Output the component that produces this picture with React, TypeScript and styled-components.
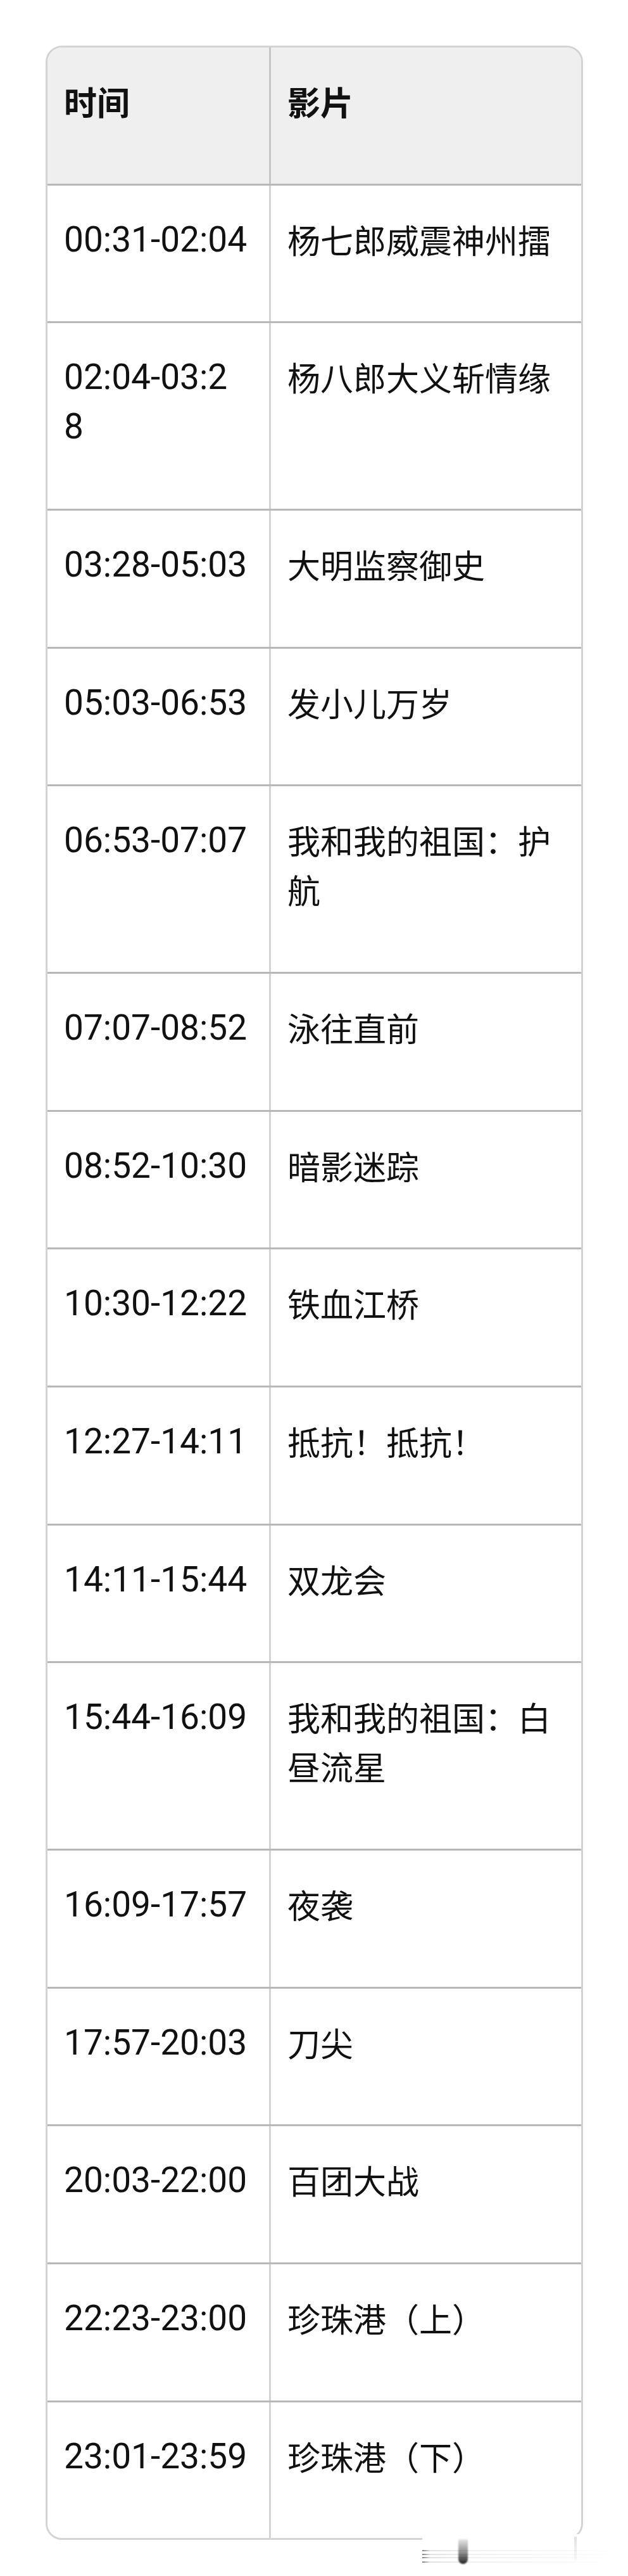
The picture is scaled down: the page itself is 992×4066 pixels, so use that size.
import styled, { createGlobalStyle } from "styled-components";

const GlobalStyle = createGlobalStyle`
  html, body {
    margin: 0;
    padding: 0;
    background: #fff;
  }
  body {
    font-family: Roboto, "Noto Sans CJK SC", sans-serif;
    color: #111;
  }
`;

const schedule: [string, string][] = [
  ["00:31-02:04", "杨七郎威震神州擂"],
  ["02:04-03:2\n8", "杨八郎大义斩情缘"],
  ["03:28-05:03", "大明监察御史"],
  ["05:03-06:53", "发小儿万岁"],
  ["06:53-07:07", "我和我的祖国：护航"],
  ["07:07-08:52", "泳往直前"],
  ["08:52-10:30", "暗影迷踪"],
  ["10:30-12:22", "铁血江桥"],
  ["12:27-14:11", "抵抗！抵抗！"],
  ["14:11-15:44", "双龙会"],
  ["15:44-16:09", "我和我的祖国：白昼流星"],
  ["16:09-17:57", "夜袭"],
  ["17:57-20:03", "刀尖"],
  ["20:03-22:00", "百团大战"],
  ["22:23-23:00", "珍珠港（上）"],
  ["23:01-23:59", "珍珠港（下）"],
];

export default function App() {
  return (
    <Page>
      <GlobalStyle />
      <Table>
        <Row $head>
          <Cell $head>时间</Cell>
          <Cell $head>影片</Cell>
        </Row>
        {schedule.map(([time, film]) => (
          <Row key={time}>
            <Cell $time>{time}</Cell>
            <Cell>{film}</Cell>
          </Row>
        ))}
      </Table>
      {/* blurred scroll handle left over in the screenshot */}
      <Smudge>
        <Handle />
      </Smudge>
    </Page>
  );
}

const Page = styled.main`
  position: relative;
  box-sizing: border-box;
  min-height: 4066px;
  padding: 72px 71px 0 72px;
`;

const Table = styled.div`
  border: 3px solid #d3d3d3;
  border-radius: 26px;
  overflow: hidden;
`;

const Row = styled.div<{ $head?: boolean }>`
  display: grid;
  grid-template-columns: 353px 490px;
  background: ${({ $head }) => ($head ? "#efefef" : "#fff")};

  & + & {
    border-top: 3px solid #b7b7b7;
  }
`;

const Cell = styled.div<{ $head?: boolean; $time?: boolean }>`
  padding: 46px 26px 90.67px;
  font-family: ${({ $time }) =>
    $time ? 'Roboto, "Noto Sans CJK SC", sans-serif' : '"Noto Sans CJK SC", sans-serif'};
  font-size: ${({ $time }) => ($time ? "55px" : "52px")};
  font-weight: ${({ $head }) => ($head ? 700 : 400)};
  line-height: 78px;
  white-space: pre-line;
  color: #111;

  &:first-child {
    border-right: 3px solid rgba(0, 0, 0, 0.17);
  }
`;

const streak = (y: number) =>
  `linear-gradient(to right, rgba(0, 0, 0, 0.5) 0, rgba(0, 0, 0, 0.12) 12px, rgba(0, 0, 0, 0.06) 70px, rgba(0, 0, 0, 0.025) 240px, rgba(0, 0, 0, 0) 305px) 0 ${y}px / 305px 2px no-repeat`;

const Smudge = styled.div`
  position: absolute;
  left: 667px;
  bottom: 12px;
  display: flex;
  align-items: flex-start;
  width: 325px;
  height: 54px;
  box-sizing: border-box;
  padding: 8px 0 0 57px;
  background: ${streak(25)}, ${streak(31)}, ${streak(36)}, ${streak(43)},
    linear-gradient(to bottom, rgba(0, 0, 0, 0.12), rgba(0, 0, 0, 0.02)) 240px 4px / 4px 38px no-repeat,
    #fff;
`;

const Handle = styled.div`
  width: 15px;
  height: 39px;
  border-radius: 2px 2px 8px 8px;
  background: linear-gradient(
    to bottom,
    rgba(0, 0, 0, 0.1),
    rgba(0, 0, 0, 0.45) 55%,
    rgba(0, 0, 0, 0.85)
  );
  filter: blur(0.8px);
`;
